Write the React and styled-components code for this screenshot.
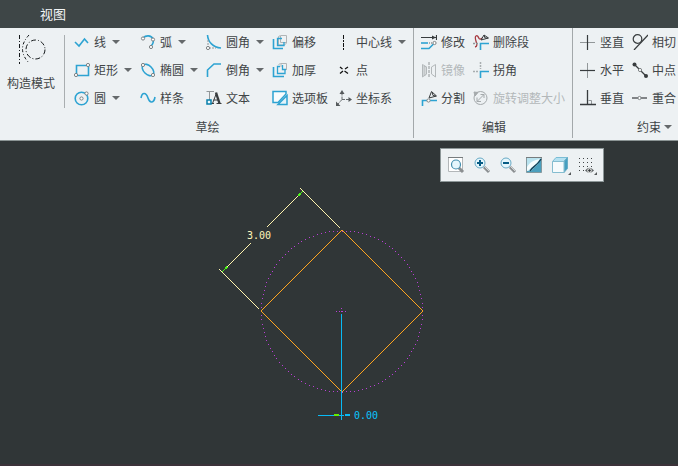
import React from "react";
import styled, { createGlobalStyle } from "styled-components";

const GlobalStyle = createGlobalStyle`
  * { box-sizing: border-box; }
  body {
    margin: 0;
    background: #303637;
    color: #404446;
    font-family: "Noto Sans CJK SC", "Liberation Sans", sans-serif;
    font-size: 12px;
  }
  button { font: inherit; color: inherit; border: 0; padding: 0; background: none; }
`;

const Window = styled.div`
  display: flex;
  flex-direction: column;
  min-height: 100vh;
  overflow: hidden;
`;

const TabBar = styled.nav`
  display: flex;
  align-items: center;
  height: 28px;
  padding-left: 40px;
  background: #3e4647;
`;

const Tab = styled.button`
  color: #f2f5f6;
  font-size: 13px;
  line-height: 20px;
`;

const Ribbon = styled.div`
  display: flex;
  height: 113px;
  overflow: hidden;
  background: #edf1f3;
  border-bottom: 1px solid #8b9494;
`;

const Group = styled.section`
  display: flex;
  flex-direction: column;
  flex: none;
  width: ${(p) => p.$width}px;
  margin-bottom: 2px;
  border-left: ${(p) => (p.$divided ? "1px solid #a3a8aa" : "0")};
`;

const GroupBody = styled.div`
  display: flex;
  height: 84px;
`;

const GroupTitle = styled.div`
  display: flex;
  align-items: center;
  justify-content: center;
  gap: 3px;
  height: 28px;
  padding-top: 3px;
  padding-left: 2px;
  line-height: 18px;
`;

const BigButton = styled.button`
  display: flex;
  flex-direction: column;
  align-items: center;
  gap: 10px;
  width: 62px;
  margin-right: 2px;
  padding-top: 6px;
  line-height: 18px;
`;

const Rule = styled.div`
  width: 1px;
  height: 73px;
  margin-top: 7px;
  background: #a9aeb0;
`;

const Grid = styled.div`
  display: grid;
  grid-template-columns: ${(p) => p.$columns};
  grid-template-rows: repeat(3, 28px);
  padding-left: ${(p) => p.$inset}px;
`;

const Tool = styled.button`
  display: flex;
  align-items: center;
  gap: 4px;
  line-height: 18px;
  white-space: nowrap;
  &:disabled { color: #b3b8ba; }
`;

const Icon = styled.svg`
  flex: none;
  width: ${(p) => p.$size || 16}px;
  height: ${(p) => p.$size || 16}px;
  fill: none;
  stroke: #2da3d2;
  stroke-width: 1.6;
`;

const Arrow = styled.span`
  width: 0;
  border: 4px solid transparent;
  border-top-color: #65696b;
  border-bottom: 0;
  margin-left: ${(p) => (p.$tight ? 0 : 2)}px;
`;

const Stage = styled.main`
  position: relative;
  flex: 1;
  min-height: 321px;
  background: #303637;
`;

const Drawing = styled.svg`
  display: block;
  width: 678px;
  height: 321px;
  fill: none;
  shape-rendering: crispEdges;
  text {
    font-family: "DejaVu Sans Mono", monospace;
    font-size: 10px;
    stroke: none;
  }
`;

const ViewBar = styled.div`
  position: absolute;
  top: 7px;
  left: 440px;
  display: flex;
  gap: 10px;
  padding: 8px 9px 8px 7px;
  background: #edf1f3;
  border: 1px solid #8d9798;
`;

const ViewButton = styled.button`
  display: flex;
`;

const Footer = styled.footer`
  height: 2px;
  background: #3b3239;
`;

const G = "#929799";
const D = "#383c3e";
const OFF = "#b3b8ba";

const Dot = ({ x, y }) => (
  <circle cx={x} cy={y} r="1.6" fill="#fff" stroke="#7d8284" strokeWidth="1" />
);

const icons = {
  line: <path d="M1 8 L5 12 L10.500 5 L14 9" />,
  rect: <><path d="M2.500 3.500 H14.500 V13.500 H2.500 Z" /><Dot x="14" y="3" /><Dot x="2" y="13" /></>,
  circle: <><circle cx="7.500" cy="8.500" r="6.300" /><Dot x="7.500" y="8.500" /><Dot x="12.500" y="3.500" /></>,
  arc: <><path d="M3 4 C6 1 11 1 13 5 C14 8 13 10 11 12" /><Dot x="3" y="4.500" /><Dot x="13" y="5.500" /><Dot x="11" y="13" /></>,
  ellipse: <><ellipse cx="8" cy="8" rx="7" ry="4.300" transform="rotate(45 8 8)" /><Dot x="3" y="3" /><Dot x="13" y="13" /></>,
  spline: <path d="M1 8 C2 2 6 2 8 8 C10 14 14 13 15 7" />,
  fillet: <><path d="M1.500 1 C2 8 7 13.500 15 14" /><path d="M2 6 V14 H10" stroke={G} strokeWidth="1" strokeDasharray="2 1" /><Dot x="2" y="14" /></>,
  chamfer: <path d="M1.500 15 V8 L8 2 H15" />,
  text: <>
    <path d="M0.500 1.500 H8 M3.500 2 V10" stroke={G} strokeWidth="1" />
    <path d="M5 13.500 H8 M6.500 13.500 L10.500 3 M7.500 10 H12 M10.500 13.500 H15.500" stroke={D} strokeWidth="1" />
    <path d="M10 2.500 L13.500 13.500" stroke={D} strokeWidth="2.400" />
    <path d="M1 10 H5 V14 H1 Z" fill="#eef9fc" stroke="#087fab" strokeWidth="1.500" />
  </>,
  offset: <><path d="M6.500 2.500 L8.500 1.500 H14.500 V9 L12.500 11 H6.500 Z M8.500 2 V8.500 H14" stroke="#b0b4b6" strokeWidth="1" /><path d="M10 4.500 H5.500 V11.500 H12 V8" strokeWidth="1.300" /><path d="M1.500 5 V14.500 H11" /></>,
  thicken: <><path d="M6.500 2.500 L8.500 1.500 H14.500 V8 M9 2 V5" stroke="#b0b4b6" strokeWidth="1" /><path d="M8 4.500 H5.500 V11.500 H13 V7" strokeWidth="1.300" /><path d="M10.500 3 V7.500 H14" strokeWidth="1.300" /><path d="M1.500 5 V14.500 H12" /></>,
  palette: <><path d="M1 1.500 H14 V4 L6 12.500 H1 Z" fill="#f8fcfd" strokeWidth="1.500" /><path d="M6 14.500 H15 V5.500 Z" fill="#e3f3f9" strokeWidth="1.500" /></>,
  center: <path d="M7.500 1 V16" stroke="#111" strokeWidth="1" strokeDasharray="4 1 2 1" shapeRendering="crispEdges" />,
  point: <path d="M4 5 L6.500 7 M8.500 9 L12 11.500 M12 5 L9 7 M7 9 L4 11.500" stroke="#111" strokeWidth="1.300" />,
  csys: <><path d="M6 9.500 V3 M6 9.500 H13 M6 9.500 L2 14" stroke="#666b6d" strokeWidth="1" strokeDasharray="3 1" /><path d="M6 0 L8.500 4 H3.500 Z M12.500 7 V12 L16 9.500 Z M0 16 V11.500 L4.500 16 Z" fill="#55595b" stroke="none" /></>,
  modify: <><path d="M0 3.500 H15 M15.500 1 V6" stroke={D} strokeWidth="1.200" /><path d="M11 1.500 L15 3.500 L11 5.500 Z" fill={D} stroke="none" /><path d="M0 9 H7" /><path d="M8 9 H12" stroke={G} strokeDasharray="1 1" /><path d="M0 14.500 H8 L12.500 10" /><Dot x="13.500" y="9" /></>,
  mirror: <g stroke={OFF} strokeWidth="1"><path d="M1.500 2.500 L5.500 5 V12 L1.500 15 Z M14.500 2.500 L10.500 5 V12 L14.500 15 Z" /><path d="M3 4 L5.500 5 V12 L3 14 Z" fill="#d5d9da" /><path d="M8 0 V16" strokeDasharray="3 1" stroke={G} /></g>,
  divide: <><path d="M1.500 16 V10.500 H6 M9 10.500 H16" /><path d="M8 8 L10.500 1.500 L15.500 6 Z M11 2 L12 5.500 L15 6" stroke={D} strokeWidth="1" /><Dot x="7.500" y="10.500" /></>,
  remove: <><path d="M2 13 C7 12 0 4 3 2 C6 0 5 8 9 4" stroke="#a83b41" strokeWidth="1.300" /><path d="M8 6 L11 1 L15.500 4 Z M11 1 L12 4 L15 4" stroke={D} strokeWidth="1" /><path d="M0 9.500 H6" stroke={G} strokeDasharray="2 1" /><path d="M7.500 16 V9.500 H16" /></>,
  corner: <><path d="M7.500 0 V7 M0 9.500 H6" stroke="#a9aeb0" strokeDasharray="2 1" strokeWidth="1.500" /><path d="M7.500 16 V9.500 H16" /></>,
  rotate: <g stroke="#a5aaac" strokeWidth="1"><circle cx="7.500" cy="8" r="6.500" /><path d="M4 11.500 L11 4.500 M4 7.500 V11.500 H8 M7.500 4.500 H11 V8" /><path d="M1 2 L5 2.500 L2 6 Z" fill="#a5aaac" /></g>,
  vertical: <><path d="M0 8.500 H15" stroke={G} strokeWidth="1" /><path d="M7.500 1 V16" stroke={D} strokeWidth="1.200" /></>,
  horizontal: <><path d="M7.500 1 V16" stroke={G} strokeWidth="1" /><path d="M0 8.500 H15" stroke={D} strokeWidth="1.200" /></>,
  perpendicular: <><path d="M8.500 10.500 H11.500 V14" stroke={G} strokeWidth="1" /><path d="M7.500 0 V14.500 M0 14.500 H16" stroke={D} strokeWidth="1.300" /></>,
  tangent: <><circle cx="5.500" cy="5" r="4.300" stroke={D} strokeWidth="1.200" /><path d="M2 16 L16 1" stroke={D} strokeWidth="1.200" /></>,
  midpoint: <><path d="M2 2 L14 14" stroke={D} strokeWidth="1.200" /><circle cx="2.500" cy="2.500" r="2" fill={D} stroke="none" /><circle cx="14" cy="14" r="2" fill={D} stroke="none" /><Dot x="8" y="8" /></>,
  coincident: <><path d="M0 8 H15" stroke={D} strokeWidth="1.200" /><Dot x="7.500" y="8" /></>,
};

const ToolButton = ({ icon, label, menu, disabled }) => (
  <Tool type="button" disabled={disabled}>
    <Icon viewBox="0 0 16 16" aria-hidden="true">{icons[icon]}</Icon>
    <span>{label}</span>
    {menu && <Arrow />}
  </Tool>
);

const sketchTools = [
  ["line", "线", true], ["arc", "弧", true], ["fillet", "圆角", true], ["offset", "偏移"], ["center", "中心线", true],
  ["rect", "矩形", true], ["ellipse", "椭圆", true], ["chamfer", "倒角", true], ["thicken", "加厚"], ["point", "点"],
  ["circle", "圆", true], ["spline", "样条"], ["text", "文本"], ["palette", "选项板"], ["csys", "坐标系"],
];
const editTools = [
  ["modify", "修改"], ["remove", "删除段"],
  ["mirror", "镜像", false, true], ["corner", "拐角"],
  ["divide", "分割"], ["rotate", "旋转调整大小", false, true],
];
const constraintTools = [
  ["vertical", "竖直"], ["tangent", "相切"],
  ["horizontal", "水平"], ["midpoint", "中点"],
  ["perpendicular", "垂直"], ["coincident", "重合"],
];

const renderTools = (tools) =>
  tools.map(([icon, label, menu, disabled]) => (
    <ToolButton key={icon} icon={icon} label={label} menu={menu} disabled={disabled} />
  ));

const Lens = ({ sign }) => (
  <>
    <path d="M10 10 L15 15" stroke="#8b8f91" strokeWidth="3" />
    <path d="M10.500 9.500 L15 14" stroke="#d2d5d6" strokeWidth="1" />
    <circle cx="6" cy="6" r="5" fill="#e5f6fc" stroke="#68a9c4" strokeWidth="1" />
    <path d={sign} stroke="#075c85" strokeWidth="2" />
  </>
);

const viewTools = [
  ["重新调整", <>
    <path d="M0.500 0.500 H14.500 V14.500 H0.500 Z" fill="#fff" stroke="#b3b7b9" strokeWidth="1" />
    <path d="M0 0.500 H15" stroke="#777c7e" strokeWidth="1" />
    <path d="M10.500 10.500 L15 15" stroke="#8b8f91" strokeWidth="3" />
    <circle cx="8" cy="7.500" r="4.500" fill="#e5f6fc" stroke="#438eae" strokeWidth="1.200" />
  </>],
  ["放大", <Lens sign="M3 6 H9 M6 3 V9" />],
  ["缩小", <Lens sign="M3 6 H9" />],
  ["重画", <>
    <path d="M0.500 0.500 H15.500 V15.500 H0.500 Z" fill="#4b9fbd" stroke="#85999f" strokeWidth="1" />
    <path d="M1 1 H15 L12 7 L5 14 H1 Z" fill="#b9e3ef" stroke="none" />
    <path d="M1 10 C4 5 8 3 14 2 L8 9 L1 14 Z" fill="#f6fcfd" stroke="none" />
    <path d="M4 14 C6 10 11 9 15 2" stroke="#16445a" strokeWidth="1.500" />
    <path d="M0 0.500 H16" stroke="#777c7e" strokeWidth="1" />
  </>],
  ["显示样式", <>
    <path d="M0.500 4.500 L4 0.500 H15.500 L12 4.500 Z" fill="#b5e1f1" stroke="#7bbdd5" strokeWidth="1" />
    <path d="M12 4.500 L15.500 0.500 V11.500 L12 15.500 Z" fill="#459fc0" stroke="#69adc6" strokeWidth="1" />
    <path d="M0.500 4.500 H12 V15.500 H0.500 Z" fill="#f6fbfd" stroke="#85bdd0" strokeWidth="1" />
    <path d="M19 15 V18 H16 Z" fill="#55595b" stroke="none" />
  </>],
  ["显示过滤器", <>
    <path d="M1 1.500 H15 M1 5.500 H15 M1 9.500 H15 M1 13.500 H7" stroke="#414547" strokeWidth="1" strokeDasharray="1 3" shapeRendering="crispEdges" />
    <path d="M7 13.500 Q11.500 8 16 13.500 Q11.500 18 7 13.500 Z" fill="#606567" stroke="none" />
    <circle cx="11.500" cy="13.500" r="1.800" fill="#303436" stroke="#fff" strokeWidth="1" />
    <path d="M19 15 V18 H16 Z" fill="#55595b" stroke="none" />
  </>],
];

const circleDots = Array.from({ length: 120 }, (_, i) => {
  const a = (i * Math.PI) / 60;
  return [Math.round(341.5 + 80.5 * Math.cos(a)), Math.round(311 + 80.5 * Math.sin(a))];
});

const SketchDrawing = () => (
  <Drawing viewBox="0 141 678 321" role="img" aria-label="草绘">
    <path d={circleDots.map(([x, y]) => `M${x} ${y}h1v1h-1z`).join("")} fill="#b83fd3" />
    <path d="M342 230 L423 311 L342 392 L261 311 Z" stroke="#ffa51f" />
    <path d="M300 188 L340 228 M219 269 L259 309 M303 191 L267 227 M251 243 L222 272" stroke="#fff4ae" />
    <path d="M303 191 L298 196 M222 272 L227 267" stroke="#4cf519" />
    <path d="M300 194 L298 196 M225 269 L227 267" stroke="#4cf519" strokeWidth="2" />
    <path d="M336 311.500 H346 M341.500 308 V317" stroke="#b83fd3" strokeDasharray="1 2" />
    <path d="M341.500 314 V420 M318 415.500 H344" stroke="#08baf5" />
    <path d="M334 415 H339" stroke="#64ed00" strokeWidth="2" />
    <path d="M345 415 H350" stroke="#08baf5" strokeWidth="2" />
    <text x="247" y="239" fill="#fff6bb">3.00</text>
    <text x="354" y="419" fill="#08c4ff">0.00</text>
  </Drawing>
);

export default function App() {
  return (
    <Window>
      <GlobalStyle />
      <TabBar><Tab type="button">视图</Tab></TabBar>
      <Ribbon>
        <Group $width={413}>
          <GroupBody>
            <BigButton type="button">
              <Icon viewBox="0 0 30 30" $size={30} aria-hidden="true">
                <g stroke="#15191b" strokeWidth="1">
                  <path d="M3.500 1 V30" strokeDasharray="4 2 1 2" />
                  <path d="M13 1 Q0 15 13 29" strokeDasharray="3 2 1 2" />
                  <circle cx="19.500" cy="15.500" r="9.500" strokeDasharray="5 2 1 2" />
                </g>
              </Icon>
              <span>构造模式</span>
            </BigButton>
            <Rule />
            <Grid $columns="66px 66px 66px 64px 76px" $inset={9}>{renderTools(sketchTools)}</Grid>
          </GroupBody>
          <GroupTitle>草绘</GroupTitle>
        </Group>
        <Group $width={159} $divided>
          <GroupBody>
            <Grid $columns="52px 92px" $inset={7}>{renderTools(editTools)}</Grid>
          </GroupBody>
          <GroupTitle>编辑</GroupTitle>
        </Group>
        <Group $width={162} $divided>
          <GroupBody>
            <Grid $columns="52px 52px" $inset={7}>{renderTools(constraintTools)}</Grid>
          </GroupBody>
          <GroupTitle>约束<Arrow $tight /></GroupTitle>
        </Group>
      </Ribbon>
      <Stage>
        <SketchDrawing />
        <ViewBar role="toolbar" aria-label="视图">
          {viewTools.map(([label, drawing]) => (
            <ViewButton key={label} type="button" aria-label={label}>
              <Icon viewBox="0 0 16 16" overflow="visible">{drawing}</Icon>
            </ViewButton>
          ))}
        </ViewBar>
      </Stage>
      <Footer />
    </Window>
  );
}
